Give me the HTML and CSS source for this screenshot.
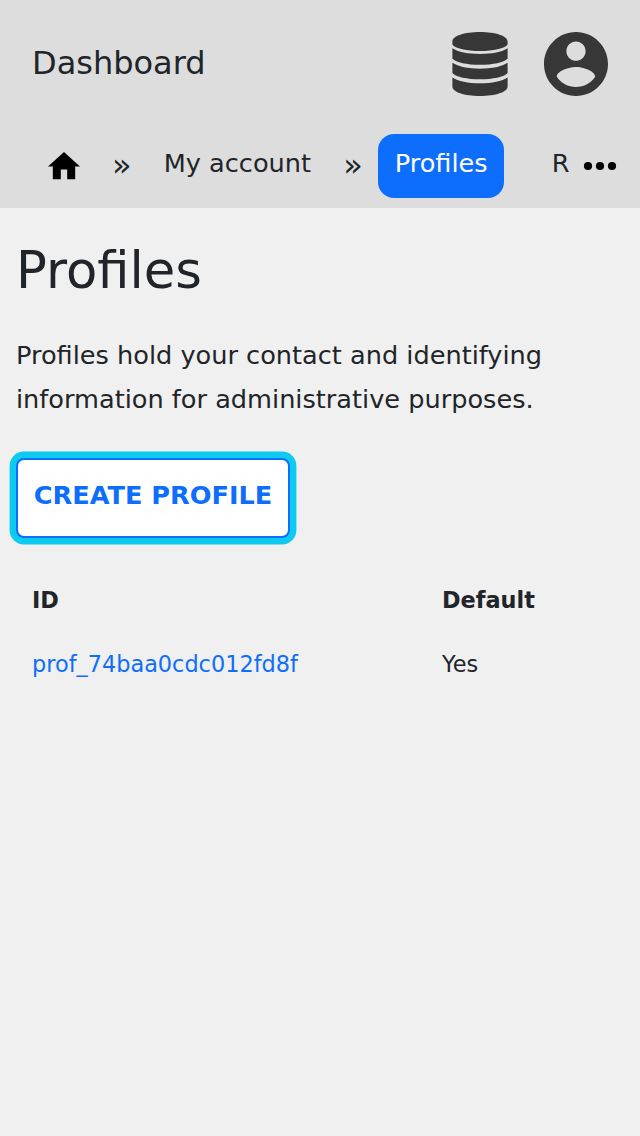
FILE: index.html
```html
<!DOCTYPE html>
<html lang="en">
<head>
<meta charset="utf-8">
<title>Profiles</title>
<link rel="stylesheet" href="styles.css">
</head>
<body>
<header class="header">
  <div class="topbar">
    <span class="brand">Dashboard</span>
    <div class="actions">
      <svg class="icon-db" viewBox="0 0 56 64"><path d="M.4 9.500C.4 4 12.500 0 28 0s27.600 4 27.600 9.500V12.500C53 16.500 41 19 28 19S3 16.500.4 12.500zM.4 16.300C6 20 16 22 28 22s22-2 27.600-5.700V26.500C52 30.500 41 32.800 28 32.800S4 30.500.4 26.500zM.4 30.800C6 34.700 16 36.700 28 36.700s22-2 27.600-5.900V41C52 45 41 47.300 28 47.300S4 45 .4 41zM.4 45.500C6 49.300 16 51.300 28 51.300s22-2 27.600-5.800V54.500C55.600 60 43.500 64 28 64S.4 60 .4 54.500z"/></svg>
      <svg class="icon-user" viewBox="2 2 20 20"><path d="M12 2C6.480 2 2 6.480 2 12s4.480 10 10 10 10-4.480 10-10S17.520 2 12 2zm0 3c1.660 0 3 1.340 3 3s-1.340 3-3 3-3-1.340-3-3 1.340-3 3-3zm0 14.200c-2.500 0-4.710-1.280-6-3.220.03-1.990 4-3.080 6-3.080 1.990 0 5.970 1.090 6 3.080-1.290 1.940-3.500 3.220-6 3.220z"/></svg>
    </div>
  </div>
  <nav class="crumbs">
    <svg class="icon-home" viewBox="2 3 20 17"><path d="M10 20v-6h4v6h5v-8h3L12 3 2 12h3v8z"/></svg>
    <span class="sep sep-first">»</span>
    <span class="crumb">My account</span>
    <span class="sep sep-second">»</span>
    <span class="crumb current">Profiles</span>
    <span class="crumb clipped">R</span>
    <svg class="icon-more" viewBox="0 0 32 8"><circle cx="4" cy="4" r="4.100"/><circle cx="16" cy="4" r="4.100"/><circle cx="28" cy="4" r="4.100"/></svg>
  </nav>
</header>
<main class="content">
  <h1 class="title">Profiles</h1>
  <p class="intro">Profiles hold your contact and identifying information for administrative purposes.</p>
  <button class="create">CREATE PROFILE</button>
  <div class="table">
    <strong>ID</strong><strong>Default</strong>
    <span class="link">prof_74baa0cdc012fd8f</span><span>Yes</span>
  </div>
</main>
</body>
</html>
```
FILE: styles.css
```css
* { box-sizing: border-box; }
body {
  margin: 0;
  min-height: 1136px;
  background: #f0f0f0;
  color: #212529;
  font-family: "DejaVu Sans", sans-serif;
  font-size: 25.6px;
}
svg { display: block; flex: none; overflow: visible; }
.header { height: 208px; background: #ddd; overflow: hidden; }
.topbar {
  display: flex;
  justify-content: space-between;
  height: 128px;
  padding: 32px;
}
.brand { font-size: 32px; line-height: 62px; }
.actions { display: flex; gap: 36px; fill: #373737; }
.icon-db { width: 56px; height: 64px; }
.icon-user { width: 64px; height: 64px; }
.crumbs {
  display: flex;
  align-items: flex-start;
  height: 80px;
  padding: 6px 24px 0 48px;
  white-space: nowrap;
}
.icon-home { width: 32px; height: 27.2px; margin-top: 18.400px; }
.sep { width: 20px; font-size: 32px; line-height: 62px; }
.sep-first { margin-left: 32px; }
.sep-second { margin-left: 32.200px; }
.crumb { height: 64px; line-height: 58px; }
.sep-first + .crumb { margin-left: 31.700px; }
.current {
  width: 126px;
  margin-left: 15px;
  padding: 0 0 0 16.500px;
  border-radius: 16px;
  background: #0d6efd;
  color: #fff;
}
.clipped { margin-left: 47.500px; }
.icon-more { width: 32px; height: 8px; margin: 28px 0 0 auto; }
.content { padding: 32px 16px; }
.title { margin: 0; font-size: 51.2px; font-weight: 400; line-height: 61px; }
.intro { margin: 32px 0 37px; line-height: 44px; }
.create {
  display: block;
  width: 274px;
  height: 80px;
  padding: 0 0 6px;
  border: 2px solid #0d6efd;
  border-radius: 8px;
  background: #fff;
  box-shadow: 0 0 0 6.4px #0dcaf0;
  color: #0d6efd;
  font: bold 25.6px "DejaVu Sans", sans-serif;
}
.table {
  display: grid;
  grid-template-columns: 410px 1fr;
  margin-top: 30px;
  padding: 0 16px;
  font-size: 22.4px;
  line-height: 64px;
}
.link { color: #0d6efd; }
```
